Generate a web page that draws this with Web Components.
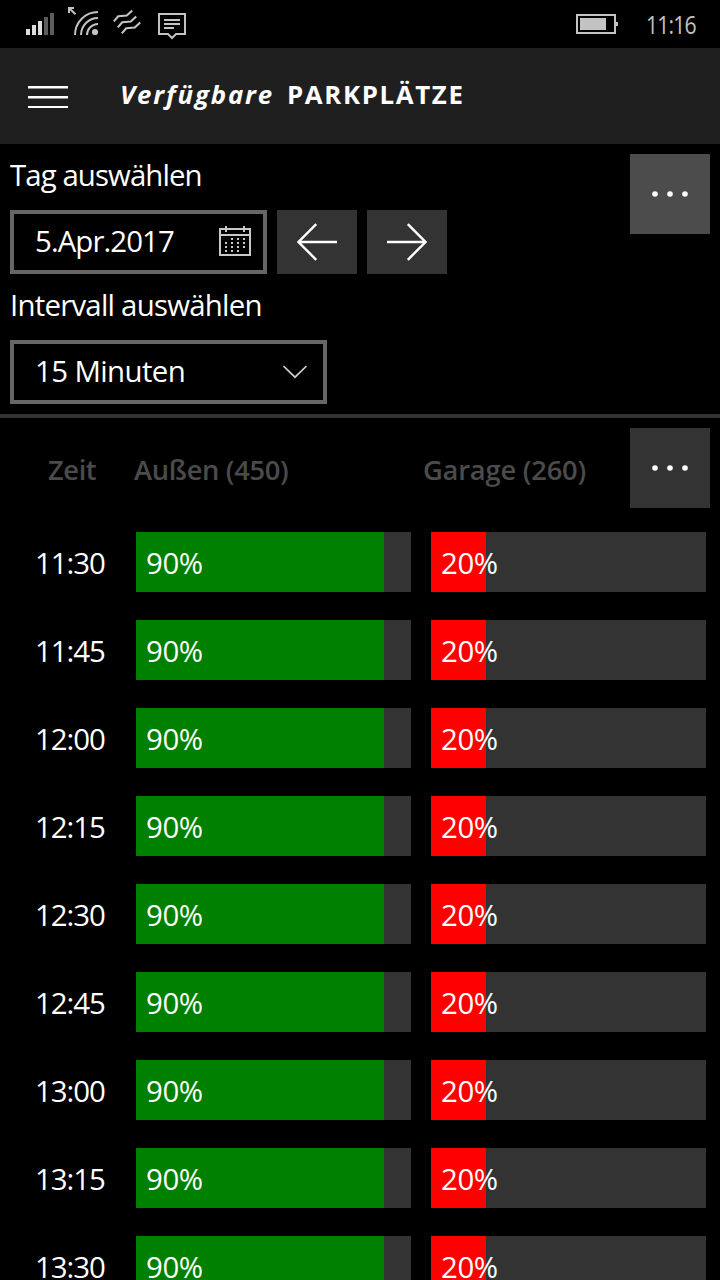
<!DOCTYPE html>
<html lang="de">
<head>
<meta charset="utf-8">
<title>Verfügbare Parkplätze</title>
<style>
  html, body { margin: 0; height: 100%; background: #000; overflow: hidden; }
  body { font-family: "Open Sans", "Noto Sans", sans-serif; color: #fff; }
</style>
</head>
<body>
<parking-app></parking-app>
<script>
function define(name, html, setup) {
  const template = document.createElement('template');
  template.innerHTML = html;
  customElements.define(name, class extends HTMLElement {
    constructor() {
      super();
      this.attachShadow({ mode: 'open' }).append(template.content.cloneNode(true));
    }
    connectedCallback() { if (setup) setup(this, this.shadowRoot); }
  });
}

define('status-bar', `
<style>
  :host { display: flex; justify-content: space-between; height: 48px; background: #000; color: #c3c3c3; }
  svg { display: block; }
  .right { display: flex; }
  .clock { width: 74px; box-sizing: border-box; font-size: 25px; line-height: 48px; letter-spacing: -1px; white-space: nowrap; }
  .clock span { display: inline-block; transform: scaleX(.845); transform-origin: 0 50%; }
</style>
<svg width="200" height="48" fill="none" stroke="#c3c3c3" stroke-width="2">
  <path fill="#dcdcdc" stroke="none" d="M26 29h4v6h-4zM32 25h4v10h-4zM38 21h4v14h-4z"/>
  <path fill="#5c5c5c" stroke="none" d="M44 17h4v18h-4zM50 13h4v22h-4z"/>
  <path stroke-width="2" d="M75 35A23 23 0 0 1 98 12M81 35A17 17 0 0 1 98 18M87 35A11 11 0 0 1 98 24M69 8l6.5 6.2M69 13V8h5"/>
  <circle cx="95" cy="32" r="3.1" fill="#c3c3c3" stroke="none"/>
  <path stroke-width="2.1" d="M113.8 21.4l4.4-5.2 8.6-.6 5.4-5M117.8 27.4l4.4-5.2 8.6-.6 5.4-5M121.8 33.4l4.4-5.2 8.6-.6 5.4-5"/>
  <path d="M159 14h26v20h-9l-4 4-4-4h-9zM164 20h16M164 24h16M164 28h10"/>
</svg>
<div class="right">
  <svg width="70" height="48" fill="none" stroke="#c3c3c3" stroke-width="2">
    <path d="M1 15h38v18H1z"/><path fill="#c3c3c3" stroke="none" d="M4 18h26v12H4zM40 22h2v4h-2z"/>
  </svg>
  <div class="clock"><span>11:16</span></div>
</div>`);

define('app-header', `
<style>
  :host { display: flex; align-items: center; height: 96px; background: #1f1f1f; padding-left: 28px; box-sizing: border-box; }
  svg { display: block; margin-right: 52px; }
  .title { display: flex; font-size: 25.8px; font-weight: 700; line-height: 40px; padding-bottom: 4px; white-space: nowrap; }
  em { width: 167px; letter-spacing: 1.85px; }
  b { font-weight: 700; letter-spacing: 1.65px; }
</style>
<svg width="40" height="24" fill="#fff"><path d="M0 2h40v2.5H0zM0 12h40v2.5H0zM0 22h40v2H0z"/></svg>
<div class="title"><em>Verfügbare</em><b>PARKPLÄTZE</b></div>`);

define('more-button', `
<style>
  :host { display: flex; align-items: center; justify-content: center; width: 80px; height: 80px; background: #333; }
  :host([active]) { background: #4c4c4c; }
</style>
<svg width="40" height="8" fill="#fff"><circle cx="5" cy="4" r="2.8"/><circle cx="20" cy="4" r="2.8"/><circle cx="35" cy="4" r="2.8"/></svg>`);

define('arrow-button', `
<style>
  :host { display: flex; align-items: center; justify-content: center; width: 80px; height: 64px; background: #333; }
  :host([next]) svg { transform: scaleX(-1); }
</style>
<svg width="40" height="40" fill="none" stroke="#fff" stroke-width="2.4"><path d="M40 20H1.8M19.2 2.2L1.5 20l17.7 17.8"/></svg>`);

define('field-label', `
<style>
  :host { display: block; height: 40px; line-height: 43px; font-size: 29.4px; white-space: nowrap; letter-spacing: var(--track, -.76px); }
</style><slot></slot>`);

define('picker-field', `
<style>
  :host { display: flex; justify-content: space-between; height: 64px; box-sizing: border-box; border: 4px solid #666; padding: 0 12px 0 21px; }
  .value { font-size: 29.4px; line-height: 55px; white-space: nowrap; letter-spacing: var(--track, -.6px); }
  ::slotted(svg) { display: block; }
</style>
<span class="value"><slot></slot></span><slot name="icon"></slot>`);

define('filter-panel', `
<style>
  :host { display: flex; justify-content: space-between; align-items: flex-start; height: 274px; box-sizing: border-box; padding: 10px 10px 0; border-bottom: 4px solid #333; }
  .row { display: flex; gap: 10px; margin: 16px 0 10px; }
  .day { width: 257px; --track: -.92px; }
  .interval { width: 317px; margin-top: 16px; }
</style>
<div>
  <field-label style="--track:-.92px">Tag auswählen</field-label>
  <div class="row">
    <picker-field class="day">5.Apr.2017
      <svg slot="icon" width="32" height="56" fill="none" stroke="#c8c8c8" stroke-width="2">
        <path d="M1 15h30v26H1zM1 21h30M7 12v6M25 12v6"/>
        <path stroke-dasharray="2 4" d="M12 25h14M6 29h20M6 33h20M6 37h14"/>
      </svg>
    </picker-field>
    <arrow-button></arrow-button>
    <arrow-button next></arrow-button>
  </div>
  <field-label>Intervall auswählen</field-label>
  <picker-field class="interval">15 Minuten
    <svg slot="icon" width="28" height="56" fill="none" stroke="#ccc" stroke-width="1.7"><path d="M.5 22L12 33.2 23.5 22"/></svg>
  </picker-field>
</div>
<more-button active></more-button>`);

define('table-head', `
<style>
  :host { display: flex; height: 80px; padding: 10px 10px 10px 48px; font-size: 27.3px; font-weight: 600; line-height: 83px; color: #4b4b4b; white-space: nowrap; }
  .time { width: 86px; letter-spacing: -.4px; }
  .outside { width: 289px; letter-spacing: -.32px; }
  .garage { flex: 1; letter-spacing: -.2px; }
</style>
<span class="time">Zeit</span><span class="outside">Außen (450)</span><span class="garage">Garage (260)</span><more-button></more-button>`);

define('usage-bar', `
<style>
  :host { display: block; height: 60px; font-size: 29.4px; line-height: 63px; letter-spacing: -.4px; padding-left: 10px; }
</style><span></span>`, (el, root) => {
  const value = el.getAttribute('value');
  root.querySelector('span').textContent = value + '%';
  const edge = Math.round(275 * value / 100) + 'px';
  el.style.background = `linear-gradient(90deg, ${el.getAttribute('color')} ${edge}, #333 ${edge})`;
});

define('time-row', `
<style>
  :host { display: grid; grid-template-columns: 101px 275px 275px; height: 88px; padding-left: 35px; align-items: center; }
  usage-bar:last-child { margin: 0 -20px 0 20px; }
  .time { height: 60px; font-size: 29.4px; line-height: 63px; letter-spacing: -1.03px; }
</style>
<span class="time"><slot></slot></span>
<usage-bar value="90" color="#008000"></usage-bar>
<usage-bar value="20" color="#f00"></usage-bar>`);

define('parking-app', `
<style>
  :host { display: flex; flex-direction: column; width: 720px; height: 1280px; overflow: hidden; background: #000; }
  status-bar, app-header, filter-panel, table-head, time-row { flex: none; }
</style>
<status-bar></status-bar>
<app-header></app-header>
<filter-panel></filter-panel>
<table-head></table-head>
${['11:30', '11:45', '12:00', '12:15', '12:30', '12:45', '13:00', '13:15', '13:30'].map(t => `<time-row>${t}</time-row>`).join('')}`);
</script>
</body>
</html>
